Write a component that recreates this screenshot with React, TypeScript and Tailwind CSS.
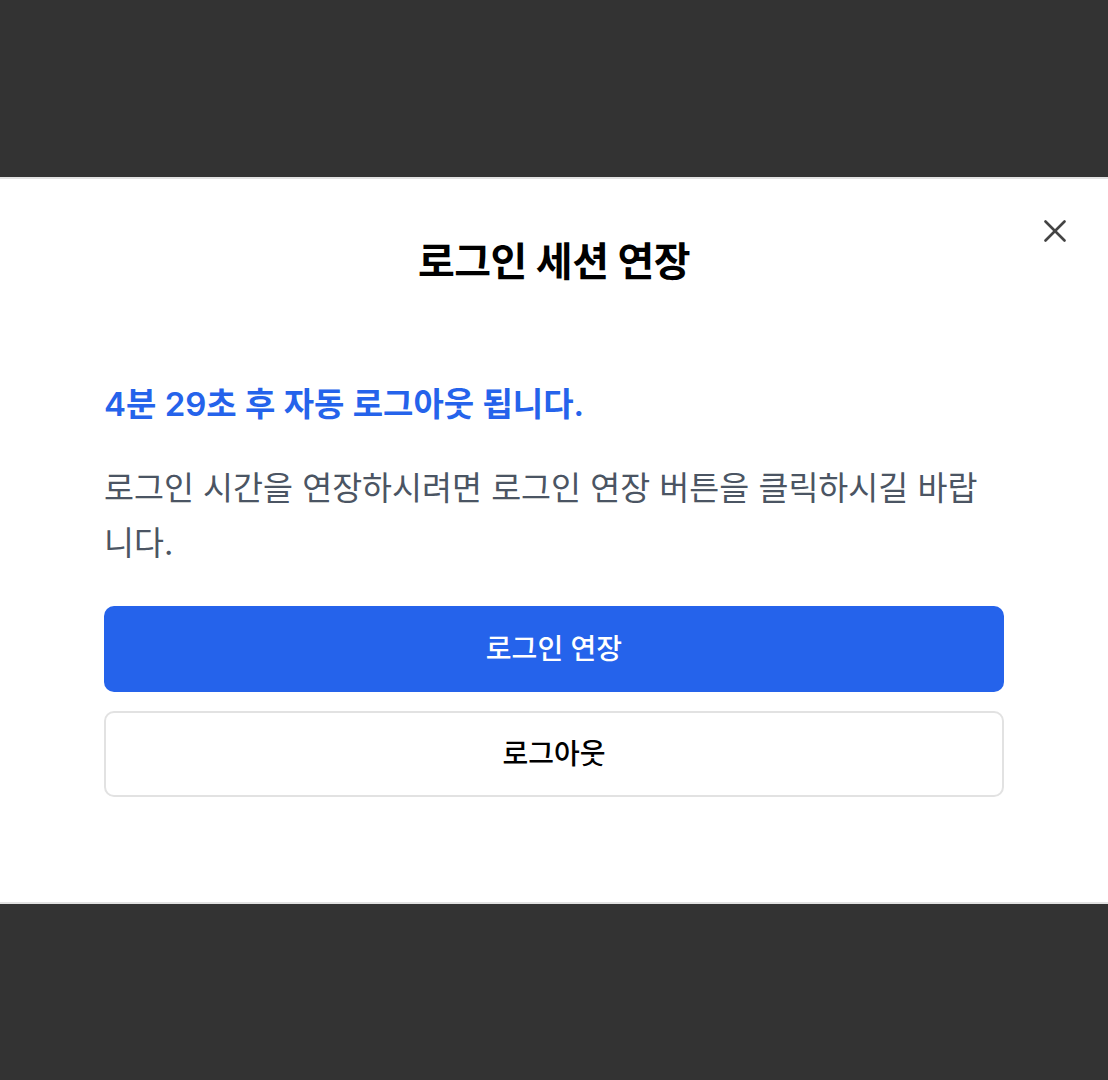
export default function App() {
  return (
    <div className="flex min-h-screen w-full items-center justify-center bg-[#333333] font-['Inter','Noto_Sans_CJK_KR',sans-serif]">
      <div className="relative w-full border-y-2 border-[#e2e2e2] bg-white px-[104px] pb-[105px] pt-[60px]">
        <button className="absolute right-[39px] top-[38px] flex h-[28px] w-[28px] items-center justify-center text-[#444444]">
          <svg width="22" height="22" viewBox="0 0 22 22" fill="none" stroke="currentColor" strokeWidth="2.6" strokeLinecap="round">
            <path d="M1.5 1.5 20.5 20.5" />
            <path d="M20.5 1.5 1.5 20.5" />
          </svg>
        </button>
        <h2 className="text-center text-[40px] font-bold leading-[45px] tracking-[-0.5px] text-black">로그인 세션 연장</h2>
        <p className="mt-[99px] text-[33px] font-semibold leading-[42px] text-[#2563eb]">4분 29초 후 자동 로그아웃 됩니다.</p>
        <p className="mt-[36px] text-[32.6px] leading-[55px] text-[#4b5563]">
          로그인 시간을 연장하시려면 로그인 연장 버튼을 클릭하시길 바랍니다.
        </p>
        <div className="mt-[35px] flex flex-col gap-[19px]">
          <button className="h-[86px] w-full rounded-[10px] bg-[#2563eb] text-[28px] font-medium text-white">로그인 연장</button>
          <button className="h-[86px] w-full rounded-[10px] border-2 border-[#e2e2e2] bg-white text-[28px] font-medium text-black">로그아웃</button>
        </div>
      </div>
    </div>
  );
}
